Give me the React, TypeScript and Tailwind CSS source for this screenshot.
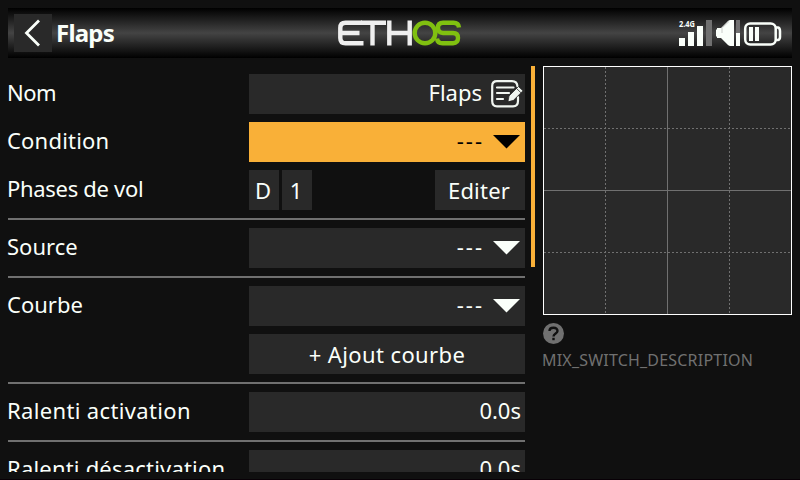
import type { ReactNode } from "react";

function Row({ label, tracking = "", children }: { label?: string; tracking?: string; children: ReactNode }) {
  return (
    <div className="flex h-10 shrink-0">
      <div className={`-ml-[1px] mr-[1px] w-[241px] shrink-0 whitespace-nowrap leading-[37px] ${tracking}`}>{label}</div>
      {children}
    </div>
  );
}

function Divider() {
  return <div className="h-[2px] shrink-0 bg-[#707070]" />;
}

function Arrow() {
  return (
    <svg width="27" height="14" viewBox="0 0 27 14" fill="currentColor">
      <path d="M0 0H27L13.5 13.5Z" />
    </svg>
  );
}

function Select({ active = false }: { active?: boolean }) {
  return (
    <div
      className={
        active
          ? "flex flex-1 items-center justify-end bg-[#f9b038] pr-[5px] text-black"
          : "flex flex-1 items-center justify-end bg-[#292929] pr-[5px] text-[#fafffa]"
      }
    >
      <span className="-mt-[5px] mr-[9px] leading-[36px] tracking-[2px]">---</span>
      <Arrow />
    </div>
  );
}

function EditIcon() {
  return (
    <svg width="34" height="28" viewBox="0 0 34 28" fill="none" stroke="#f0f5f0" strokeWidth="2.2" strokeLinecap="round">
      <path d="M26.500 6.500Q26 1.200 21 1.200H6Q1.200 1.200 1.200 6V21Q1.200 26.300 6 26.300H22Q27 26.300 27 21V17" />
      <path d="M6 7.500H22.500M6 13H18M6 19H12" />
      <path d="M17 21.500L18 16L27.500 6.500L32 10.800L22.500 20.300Z" fill="#f0f5f0" stroke="#292929" strokeWidth="0.8" />
      <path d="M25.500 8.500L30 12.800" stroke="#292929" strokeWidth="0.8" />
    </svg>
  );
}

function EthosLogo() {
  return (
    <svg width="124" height="26" viewBox="0 0 124 26" fill="none" strokeWidth="4.4">
      <g stroke="#efefef">
        <path d="M24 2.800H7.500Q2.300 2.800 2.300 8V18Q2.300 23.300 7.500 23.300H25.500M2.300 13H21.500" />
        <path d="M23 2.800H48M34.500 2.800V25.600" />
        <path d="M51.300 0.500V25.600M71.700 0.500V25.600M51.300 13H71.700" />
      </g>
      <g stroke="#80c010">
        <ellipse cx="87" cy="13" rx="10.300" ry="10.300" />
        <path d="M121 7.500Q120.500 2.800 115.500 2.800H105Q100 2.800 100 7.800T105 13H115Q120 13 120 18T115 23.300H104.500Q99.500 23.300 99 18.500" />
      </g>
    </svg>
  );
}

function StatusIcons() {
  return (
    <svg width="104" height="28" viewBox="0 0 104 28">
      <g fill="#fafffa">
        <rect x="1" y="19" width="6" height="8" />
        <rect x="10" y="13" width="6" height="14" />
        <rect x="19" y="7" width="6" height="20" />
        <rect x="28" y="1" width="6" height="26" fill="#707070" />
        <path d="M39 9H43L50 2Q51 1 52.500 1H56V27H52.500Q51 27 50 26L43 19H39V17.500H38V10.500H39Z" />
        <path d="M44 9V14M44.500 8.500L51 2.500" stroke="#aaa" strokeWidth=".6" fill="none" />
        <rect x="58" y="1" width="4" height="13" fill="#707070" />
        <rect x="58" y="14" width="4" height="13" />
        <rect x="71" y="8" width="4" height="14" />
        <rect x="77" y="8" width="4" height="14" />
      </g>
      <g fill="none" stroke="#fafffa">
        <rect x="67.200" y="4.500" width="30.500" height="21" rx="5" strokeWidth="2.500" />
        <path d="M98 8.500H100Q102 9 102 12V18Q102 20.500 100 21H98" strokeWidth="2.500" />
      </g>
      <text x="1" y="7.500" className="font-bold tracking-normal" fontSize="8.500" textLength="16" lengthAdjust="spacingAndGlyphs" fill="#fafffa">2.4G</text>
    </svg>
  );
}

function Graph() {
  return (
    <svg width="249" height="249" viewBox="0 0 249 249" shapeRendering="crispEdges" fill="none" stroke="#707070">
      <rect x=".5" y=".5" width="248" height="248" fill="#292929" stroke="#fff" />
      <path d="M62.500 1V248M186.500 1V248M1 62.500H248M1 186.500H248" strokeDasharray="2 2" />
      <path d="M124.500 1V248M1 124.500H248" />
    </svg>
  );
}

export default function App() {
  return (
    <div className="flex h-[480px] w-[800px] flex-col overflow-hidden border-b border-[#080006] bg-[#101010] px-2 pt-2 font-['Noto_Sans',sans-serif] text-[22px] text-[#fafffa]">
      <header className="grid h-[50px] shrink-0 grid-cols-3 items-center bg-[linear-gradient(to_bottom,#000,#444_50%,#000)]">
        <div className="flex items-center pl-[6px]">
          <button className="flex h-[38px] w-[38px] items-center justify-center bg-[#292929]">
            <svg className="mr-[2px]" width="18" height="28" viewBox="0 0 18 28" fill="none" stroke="#fafffa" strokeWidth="2.8">
              <path d="M16 1.500L3.500 14L16 26.500" />
            </svg>
          </button>
          <h1 className="ml-1 text-[24px] font-bold leading-[50px] tracking-[-0.8px]">Flaps</h1>
        </div>
        <div className="flex justify-center">
          <EthosLogo />
        </div>
        <div className="flex justify-end pr-[10px]">
          <StatusIcons />
        </div>
      </header>

      <main className="mt-2 flex h-[406px] shrink-0">
        <section className="-ml-2 flex w-[525px] flex-col gap-2 overflow-hidden pl-2 pt-2">
          <Row label="Nom" tracking="tracking-[-0.5px]">
            <div className="flex flex-1 items-center justify-end bg-[#292929]">
              <span className="-mt-[3px] mr-[9px] leading-[37px]">Flaps</span>
              <EditIcon />
            </div>
          </Row>
          <Row label="Condition" tracking="tracking-[0.2px]">
            <Select active />
          </Row>
          <Row label="Phases de vol" tracking="tracking-[-0.3px]">
            <div className="flex flex-1 gap-[3px] text-center leading-[41px]">
              <div className="w-[30px] bg-[#292929] pr-[2px]">D</div>
              <div className="w-[30px] bg-[#292929] pr-[2px]">1</div>
              <button className="ml-auto w-[90px] bg-[#292929] pr-[2px] tracking-[0.2px]">Editer</button>
            </div>
          </Row>
          <Divider />
          <Row label="Source">
            <Select />
          </Row>
          <Divider />
          <Row label="Courbe">
            <Select />
          </Row>
          <Row>
            <button className="flex-1 bg-[#292929] leading-[41px] tracking-[0.4px]">+ Ajout courbe</button>
          </Row>
          <Divider />
          <Row label="Ralenti activation" tracking="tracking-[0.35px]">
            <div className="flex-1 bg-[#292929] pr-1 text-right leading-[37px]">0.0s</div>
          </Row>
          <Divider />
          <Row label="Ralenti désactivation" tracking="tracking-[0.2px]">
            <div className="flex-1 bg-[#292929] pr-1 text-right leading-[37px]">0.0s</div>
          </Row>
        </section>
        <div className="ml-[6px] h-[201px] w-1 bg-[#f9b038]" />
        <aside className="ml-2 w-[249px]">
          <Graph />
          <svg className="mt-2" width="21" height="21" viewBox="0 0 21 21">
            <circle cx="10.500" cy="10.500" r="10.500" fill="#707070" />
            <path d="M6.500 8Q6.500 4.800 10.500 4.800T14.500 8C14.500 10.500 10.500 10.500 10.500 13.500" fill="none" stroke="#101010" strokeWidth="2.4" />
            <rect x="9.300" y="14.800" width="2.400" height="2.400" fill="#101010" />
          </svg>
          <p className="-ml-[1px] mt-1 text-[16px] leading-[24px] tracking-[0.2px] text-[#707070]">MIX_SWITCH_DESCRIPTION</p>
        </aside>
      </main>
    </div>
  );
}
